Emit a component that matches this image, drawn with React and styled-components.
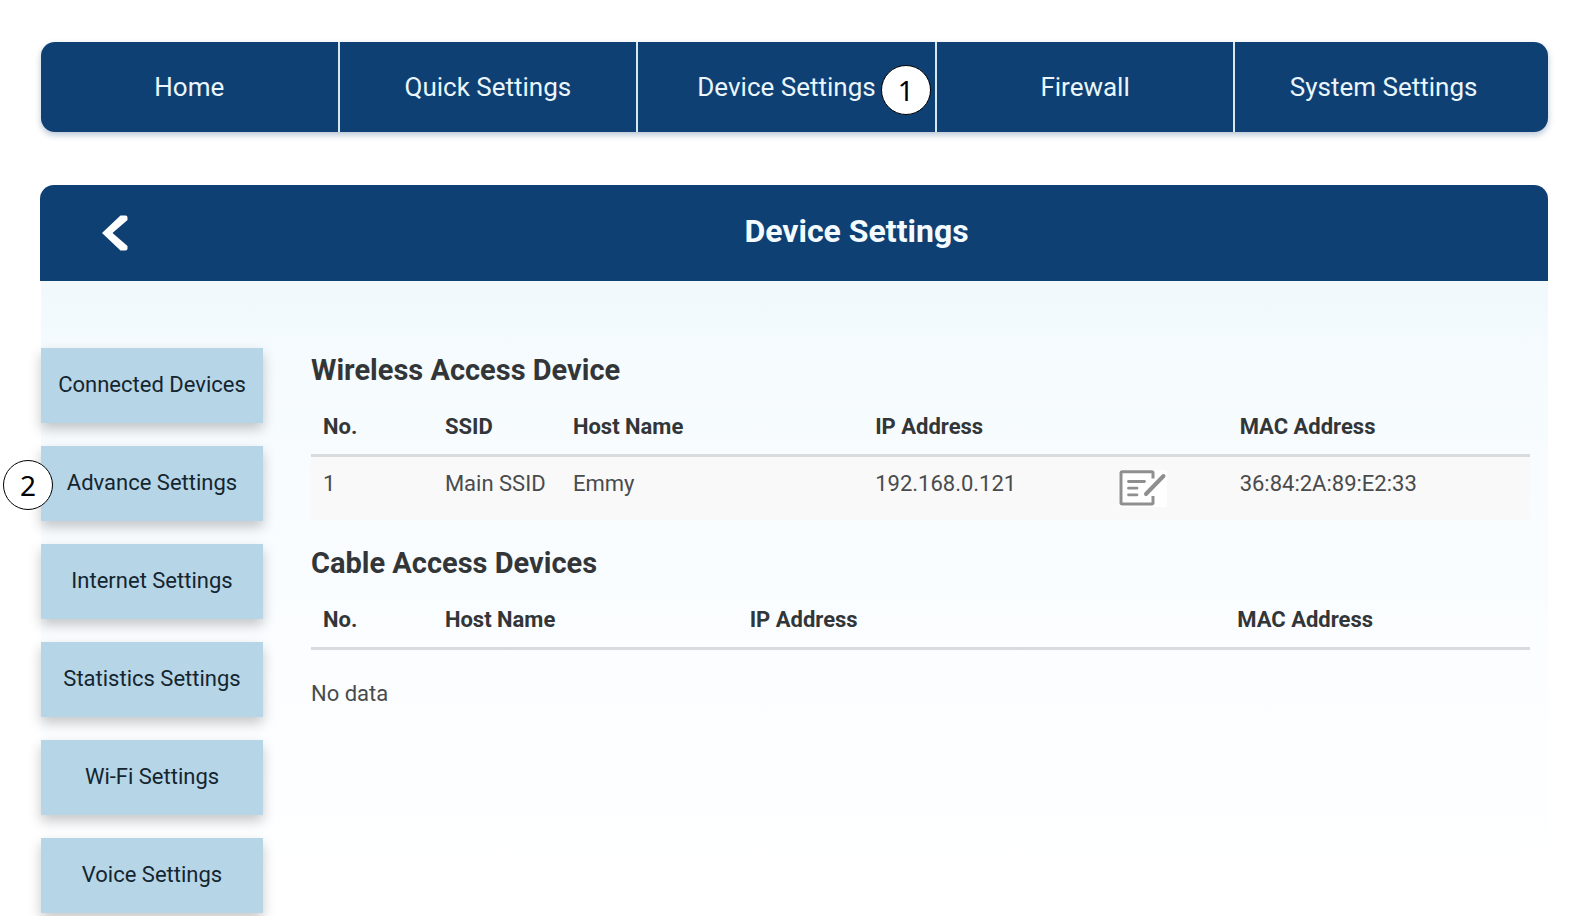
import React, { useState } from "react";
import styled, { createGlobalStyle } from "styled-components";

const tabs = [
  { name: "Home" },
  { name: "Quick Settings" },
  { name: "Device Settings", step: 1 },
  { name: "Firewall" },
  { name: "System Settings" },
];

const menu = [
  { name: "Connected Devices" },
  { name: "Advance Settings", step: 2 },
  { name: "Internet Settings" },
  { name: "Statistics Settings" },
  { name: "Wi-Fi Settings" },
  { name: "Voice Settings" },
];

const wireless = [
  {
    no: 1,
    ssid: "Main SSID",
    host: "Emmy",
    ip: "192.168.0.121",
    mac: "36:84:2A:89:E2:33",
  },
];

const cable = [];

function EditIcon() {
  return (
    <svg width="48" height="37" viewBox="0 0 48 37" fill="none" stroke="#8f8f8f">
      <path
        d="M34 8.5V3Q34 1.8 32.8 1.8H3.2Q2 1.8 2 3V32.8Q2 34 3.2 34H32.8Q34 34 34 32.8V26"
        strokeWidth="3"
      />
      <path
        d="M9.5 11.5H25.5M9.5 18.2H18M9.5 24.8H18"
        strokeWidth="2.8"
        strokeLinecap="round"
      />
      <path d="M27 24L44.5 6" strokeWidth="4" strokeLinecap="round" />
    </svg>
  );
}

function App() {
  const [page, setPage] = useState("Connected Devices");

  return (
    <>
      <GlobalStyle />
      <Page>
        <Nav>
          {tabs.map((tab) => (
            <Tab href="#" key={tab.name}>
              {tab.name}
              {tab.step && <TabStep>{tab.step}</TabStep>}
            </Tab>
          ))}
        </Nav>
        <main>
          <Header>
            <Back aria-label="Back">
              <svg width="26" height="36" viewBox="0 0 26 36" fill="#fff">
                <path d="M0 18L18.5 0.5H23.5Q25.5 0.5 25.5 2.5V5L10.5 18L25.5 31V33.5Q25.5 35.5 23.5 35.5H18.5Z" />
              </svg>
            </Back>
            <Title>Device Settings</Title>
          </Header>
          <Body>
            <Menu>
              {menu.map((item) => (
                <MenuButton
                  key={item.name}
                  aria-pressed={page === item.name}
                  onClick={() => setPage(item.name)}
                >
                  {item.name}
                  {item.step && <MenuStep>{item.step}</MenuStep>}
                </MenuButton>
              ))}
            </Menu>
            <Content>
              <Heading>Wireless Access Device</Heading>
              <Table>
                <thead>
                  <tr>
                    <Th $width="10%">No.</Th>
                    <Th $width="10.5%">SSID</Th>
                    <Th $width="24.8%">Host Name</Th>
                    <Th $width="20%">IP Address</Th>
                    <Th $width="9.9%" aria-label="Edit" />
                    <Th>MAC Address</Th>
                  </tr>
                </thead>
                <tbody>
                  {wireless.map((row) => (
                    <Row key={row.no}>
                      <Td>{row.no}</Td>
                      <Td>{row.ssid}</Td>
                      <Td>{row.host}</Td>
                      <Td>{row.ip}</Td>
                      <Td>
                        <Edit aria-label="Edit host">
                          <EditIcon />
                        </Edit>
                      </Td>
                      <Td>{row.mac}</Td>
                    </Row>
                  ))}
                </tbody>
              </Table>
              <Heading>Cable Access Devices</Heading>
              <Table>
                <thead>
                  <tr>
                    <Th $width="10%">No.</Th>
                    <Th $width="25%">Host Name</Th>
                    <Th $width="40%">IP Address</Th>
                    <Th>MAC Address</Th>
                  </tr>
                </thead>
              </Table>
              {cable.length === 0 && <Empty>No data</Empty>}
            </Content>
          </Body>
        </main>
      </Page>
    </>
  );
}

export default App;

const GlobalStyle = createGlobalStyle`
  * {
    box-sizing: border-box;
  }
  body {
    margin: 0;
    background: #fff;
    color: #333638;
    font-family: Roboto, sans-serif;
    font-size: 22px;
    line-height: 28px;
  }
  button {
    padding: 0;
    border: none;
    background: none;
    font: inherit;
    cursor: pointer;
  }
  svg {
    display: block;
  }
`;

const Page = styled.div`
  padding: 42px 32px 0 40px;
`;

const Nav = styled.nav`
  display: flex;
  height: 90px;
  margin: 0 0 53px 1px;
  padding-right: 16px;
  background: #0f4074;
  border-radius: 14px;
  box-shadow: 0 3px 6px #0f40744d;
`;

const Tab = styled.a`
  position: relative;
  display: flex;
  flex: 1;
  align-items: center;
  justify-content: center;
  color: #eaf6fc;
  font-size: 26px;
  text-decoration: none;

  & + & {
    border-left: 2px solid #d5e8ee;
  }
`;

const Step = styled.span`
  position: absolute;
  z-index: 1;
  display: flex;
  align-items: center;
  justify-content: center;
  width: 50px;
  height: 50px;
  border: 1px solid #000;
  border-radius: 50%;
  background: #fff;
  color: #000;
  font-family: "Noto Sans", sans-serif;
  font-size: 28px;
`;

const TabStep = styled(Step)`
  top: 23px;
  right: 4px;
`;

const MenuStep = styled(Step)`
  top: 14px;
  left: -38px;
`;

const Header = styled.header`
  display: flex;
  align-items: center;
  height: 96px;
  background: #0f4074;
  border-radius: 14px 14px 0 0;
`;

const Back = styled.button`
  display: flex;
  justify-content: center;
  width: 54px;
  margin: 0 23px 0 48px;
`;

const Title = styled.h1`
  flex: 1;
  margin: 0;
  padding-bottom: 4px;
  color: #f3fbff;
  font-size: 32px;
  line-height: 36px;
  text-align: center;
`;

const Body = styled.div`
  display: flex;
  gap: 48px;
  margin-left: 1px;
  padding: 67px 18px 4px 0;
  background: linear-gradient(#f1f9fc, #f6fbfe 15%, #fafdff 50%, #fdfeff 80%, #fff 95%);
`;

const Menu = styled.nav`
  display: flex;
  flex: none;
  flex-direction: column;
  gap: 23px;
  width: 222px;
`;

const MenuButton = styled.button`
  position: relative;
  height: 75px;
  background: #b6d5e7;
  color: #14252f;
  box-shadow: 0 6px 12px #00000038;

  && {
    padding-bottom: 2px;
  }
`;

const Content = styled.section`
  flex: 1;
  padding-top: 4px;
`;

const Heading = styled.h2`
  margin: 0 0 12px;
  font-size: 29px;
  line-height: 36px;

  table + & {
    margin-top: 25px;
  }
`;

const Table = styled.table`
  width: 100%;
  table-layout: fixed;
  border-collapse: separate;
  border-spacing: 0;
`;

const Th = styled.th`
  width: ${(props) => props.$width || "auto"};
  padding: 13px 0 13px 12px;
  border-bottom: 3px solid #d9dcde;
  text-align: left;
`;

const Row = styled.tr`
  background: #f9f9f9;
`;

const Td = styled.td`
  padding: 13px 0 13px 12px;
  color: #494b4d;
  vertical-align: top;
  white-space: nowrap;
`;

const Edit = styled.button`
  display: block;
  background: #fff;
`;

const Empty = styled.p`
  margin: 30px 0 0;
  color: #494b4d;
`;
